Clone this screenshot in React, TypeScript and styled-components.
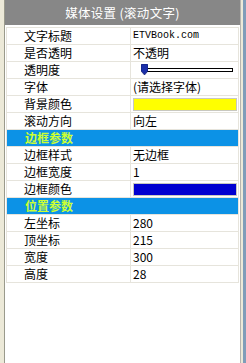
import styled, { createGlobalStyle } from 'styled-components';

const GlobalStyle = createGlobalStyle`
  html, body {
    margin: 0;
    padding: 0;
    background: #ffffff;
  }
  * {
    box-sizing: border-box;
  }
`;

const Frame = styled.div`
  width: 246px;
  height: 363px;
  border-left: 4px solid #ece9d8;
  border-right: 3px solid #7f9db9;
  background: #ece9d8;
  display: flex;
`;

const Panel = styled.div`
  flex: 1;
  margin-right: 2px;
  background: #ffffff;
  border-left: 1px solid #9a9a8c;
  border-right: 1px solid #b5b5b0;
  display: flex;
  flex-direction: column;
  font-family: 'Noto Sans CJK SC', 'Liberation Sans', sans-serif;
  font-size: 12px;
  color: #000000;
`;

const TitleBar = styled.div`
  height: 25px;
  background: #878787;
  color: #ffffff;
  font-size: 12.5px;
  line-height: 25px;
  text-align: center;
  letter-spacing: 0.3px;
`;

const Table = styled.div`
  margin: 2px 1px 0 1px;
  border-top: 1px solid #e6e4dc;
  border-left: 1px solid #e6e4dc;
  border-right: 1px solid #e6e4dc;
`;

const Row = styled.div`
  display: grid;
  grid-template-columns: 124px 1fr;
  height: 17px;
  border-bottom: 1px solid #e6e4dc;
`;

const Label = styled.div`
  padding-left: 17px;
  line-height: 16px;
  border-right: 1px solid #e6e4dc;
  white-space: nowrap;
`;

const Value = styled.div<{ $mono?: boolean }>`
  padding-left: 2px;
  line-height: 16px;
  white-space: nowrap;
  font-family: ${(p) =>
    p.$mono ? "'Liberation Mono', monospace" : "'Noto Sans CJK SC', 'Liberation Sans', sans-serif"};
  font-size: ${(p) => (p.$mono ? '10px' : '12px')};
  display: flex;
  align-items: center;
`;

const Section = styled.div`
  height: 17px;
  background: #0c92e6;
  border-bottom: 1px solid #e6e4dc;
  color: #ccff33;
  font-weight: bold;
  line-height: 16px;
  padding-left: 18px;
`;

const Swatch = styled.div<{ $color: string }>`
  width: 104px;
  height: 13px;
  margin-left: 0px;
  background: ${(p) => p.$color};
  border: 1px solid #c8c8c0;
`;

const Slider = styled.div`
  position: relative;
  width: 92px;
  height: 16px;
  margin-left: 8px;
`;

const Track = styled.div`
  position: absolute;
  left: 2px;
  right: 0;
  top: 6px;
  height: 4px;
  border: 1px solid #000000;
  background: #ffffff;
`;

const Thumb = styled.svg`
  position: absolute;
  left: 0;
  top: 2px;
`;

type Item = { label: string; value?: string; mono?: boolean; kind?: 'slider' | 'color'; color?: string };

const general: Item[] = [
  { label: '文字标题', value: 'ETVBook.com', mono: true },
  { label: '是否透明', value: '不透明' },
  { label: '透明度', kind: 'slider' },
  { label: '字体', value: '(请选择字体)' },
  { label: '背景颜色', kind: 'color', color: '#ffff00' },
  { label: '滚动方向', value: '向左' },
];

const border: Item[] = [
  { label: '边框样式', value: '无边框' },
  { label: '边框宽度', value: '1' },
  { label: '边框颜色', kind: 'color', color: '#0000d0' },
];

const position: Item[] = [
  { label: '左坐标', value: '280' },
  { label: '顶坐标', value: '215' },
  { label: '宽度', value: '300' },
  { label: '高度', value: '28' },
];

const renderRow = (item: Item) => (
  <Row key={item.label}>
    <Label>{item.label}</Label>
    <Value $mono={item.mono}>
      {item.kind === 'slider' ? (
        <Slider>
          <Track />
          <Thumb width="7" height="11" viewBox="0 0 7 11">
            <path d="M1 0 H6 Q7 0 7 1 V7 L3.5 11 L0 7 V1 Q0 0 1 0 Z" fill="#1b2fa8" stroke="#0a1460" strokeWidth="0.6" />
          </Thumb>
        </Slider>
      ) : item.kind === 'color' ? (
        <Swatch $color={item.color || '#fff'} />
      ) : (
        item.value
      )}
    </Value>
  </Row>
);

const App = () => {
  return (
    <>
      <GlobalStyle />
      <Frame>
        <Panel>
          <TitleBar>媒体设置 (滚动文字)</TitleBar>
          <Table>
            {general.map(renderRow)}
            <Section>边框参数</Section>
            {border.map(renderRow)}
            <Section>位置参数</Section>
            {position.map(renderRow)}
          </Table>
        </Panel>
      </Frame>
    </>
  );
};

export default App;
